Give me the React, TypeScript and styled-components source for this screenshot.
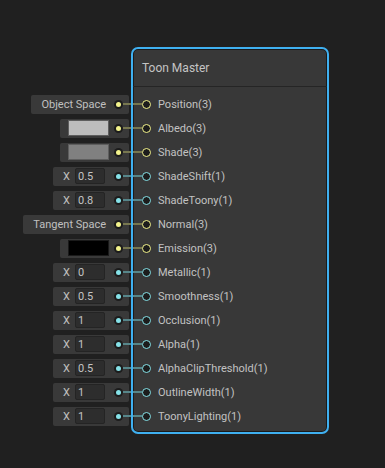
import React from "react";
import styled, { createGlobalStyle } from "styled-components";

const Global = createGlobalStyle`
  html, body { margin: 0; padding: 0; background: #202020; }
  body { font-family: Roboto, "Noto Sans", sans-serif; width: 385px; height: 468px; overflow: hidden; }
`;

type Tone = "yellow" | "cyan";
const TONES = {
  yellow: { dot: "#f3f38c", wire: "#77774f" },
  cyan: { dot: "#86e2e8", wire: "#56868a" },
};

type Input =
  | { kind: "text"; text: string }
  | { kind: "swatch"; color: string }
  | { kind: "float"; value: string };

type Row = { label: string; tone: Tone; input: Input };

const rows: Row[] = [
  { label: "Position(3)", tone: "yellow", input: { kind: "text", text: "Object Space" } },
  { label: "Albedo(3)", tone: "yellow", input: { kind: "swatch", color: "#bdbdbd" } },
  { label: "Shade(3)", tone: "yellow", input: { kind: "swatch", color: "#808080" } },
  { label: "ShadeShift(1)", tone: "cyan", input: { kind: "float", value: "0.5" } },
  { label: "ShadeToony(1)", tone: "cyan", input: { kind: "float", value: "0.8" } },
  { label: "Normal(3)", tone: "yellow", input: { kind: "text", text: "Tangent Space" } },
  { label: "Emission(3)", tone: "yellow", input: { kind: "swatch", color: "#000000" } },
  { label: "Metallic(1)", tone: "cyan", input: { kind: "float", value: "0" } },
  { label: "Smoothness(1)", tone: "cyan", input: { kind: "float", value: "0.5" } },
  { label: "Occlusion(1)", tone: "cyan", input: { kind: "float", value: "1" } },
  { label: "Alpha(1)", tone: "cyan", input: { kind: "float", value: "1" } },
  { label: "AlphaClipThreshold(1)", tone: "cyan", input: { kind: "float", value: "0.5" } },
  { label: "OutlineWidth(1)", tone: "cyan", input: { kind: "float", value: "1" } },
  { label: "ToonyLighting(1)", tone: "cyan", input: { kind: "float", value: "1" } },
];

const Canvas = styled.div`
  display: flex;
  padding-top: 47px;
`;

const InputColumn = styled.div`
  width: 131px;
  flex: none;
  padding-top: 45px;
  display: flex;
  flex-direction: column;
`;

const InputRow = styled.div`
  height: 24px;
  display: flex;
  align-items: center;
  justify-content: flex-end;
`;

const InputBox = styled.div<{ $pl: number }>`
  height: 19px;
  display: flex;
  align-items: center;
  padding-left: ${(p) => p.$pl}px;
  background: #393939;
  border-radius: 2px;
  color: #c0c0c0;
  font-size: 11px;
`;

const BoxText = styled.span`
  margin-right: 8px;
  white-space: nowrap;
`;

const Swatch = styled.div<{ $c: string }>`
  width: 41px;
  height: 16px;
  box-sizing: border-box;
  background: ${(p) => p.$c};
  border: 1px solid ${(p) => (p.$c === "#000000" ? "#1a1a1a" : "#5e5e5e")};
  margin-right: 5px;
`;

const XLabel = styled.span`
  width: 12px;
  flex: none;
`;

const FloatField = styled.div`
  width: 30px;
  height: 16px;
  box-sizing: border-box;
  background: #2d2d2d;
  border: 1px solid #242424;
  border-radius: 2px;
  padding-left: 2px;
  display: flex;
  align-items: center;
  margin-right: 9px;
  color: #c4c4c4;
`;

const Dot = styled.div<{ $tone: Tone }>`
  width: 9px;
  height: 9px;
  flex: none;
  border-radius: 50%;
  background: #1c1c1c;
  display: flex;
  align-items: center;
  justify-content: center;
  &::after {
    content: "";
    width: 5px;
    height: 5px;
    border-radius: 50%;
    background: ${(p) => TONES[p.$tone].dot};
  }
`;

const Wire = styled.div<{ $tone: Tone; $w: number }>`
  width: ${(p) => p.$w}px;
  height: 2px;
  flex: none;
  background: ${(p) => TONES[p.$tone].wire};
`;

const Node = styled.div`
  width: 198px;
  height: 387px;
  box-sizing: border-box;
  flex: none;
  border: 2px solid #3fb0f0;
  border-radius: 7px;
  background: #383838;
  box-shadow: inset 0 0 0 1px #1b1b1b;
  display: flex;
  flex-direction: column;
`;

const Header = styled.div`
  height: 37px;
  flex: none;
  display: flex;
  align-items: center;
  padding-left: 9px;
  color: #c4c4c4;
  font-size: 12px;
  border-bottom: 1px solid #252525;
`;

const Ports = styled.div`
  padding-top: 5px;
  display: flex;
  flex-direction: column;
`;

const PortRow = styled.div`
  height: 24px;
  display: flex;
  align-items: center;
`;

const PortCircle = styled.div<{ $tone: Tone }>`
  width: 9px;
  height: 9px;
  flex: none;
  box-sizing: border-box;
  border-radius: 50%;
  border: 1.5px solid ${(p) => TONES[p.$tone].dot};
  background: #1c1c1c;
`;

const PortLabel = styled.span`
  margin-left: 7px;
  color: #c2c2c2;
  font-size: 11px;
  white-space: nowrap;
`;

function InputControl({ row }: { row: Row }) {
  const { input, tone } = row;
  let pl = 10;
  let content: React.ReactNode = null;
  if (input.kind === "text") {
    content = <BoxText>{input.text}</BoxText>;
  } else if (input.kind === "swatch") {
    pl = 8;
    content = <Swatch $c={input.color} />;
  } else {
    content = (
      <>
        <XLabel>X</XLabel>
        <FloatField>{input.value}</FloatField>
      </>
    );
  }
  return (
    <InputRow>
      <InputBox $pl={pl}>
        {content}
        <Dot $tone={tone} />
        <Wire $tone={tone} $w={6} />
      </InputBox>
      <Wire $tone={tone} $w={2} />
    </InputRow>
  );
}

export default function App() {
  return (
    <>
      <Global />
      <Canvas>
        <InputColumn>
          {rows.map((r) => (
            <InputControl key={r.label} row={r} />
          ))}
        </InputColumn>
        <Node>
          <Header>Toon Master</Header>
          <Ports>
            {rows.map((r) => (
              <PortRow key={r.label}>
                <Wire $tone={r.tone} $w={9} />
                <PortCircle $tone={r.tone} />
                <PortLabel>{r.label}</PortLabel>
              </PortRow>
            ))}
          </Ports>
        </Node>
      </Canvas>
    </>
  );
}
